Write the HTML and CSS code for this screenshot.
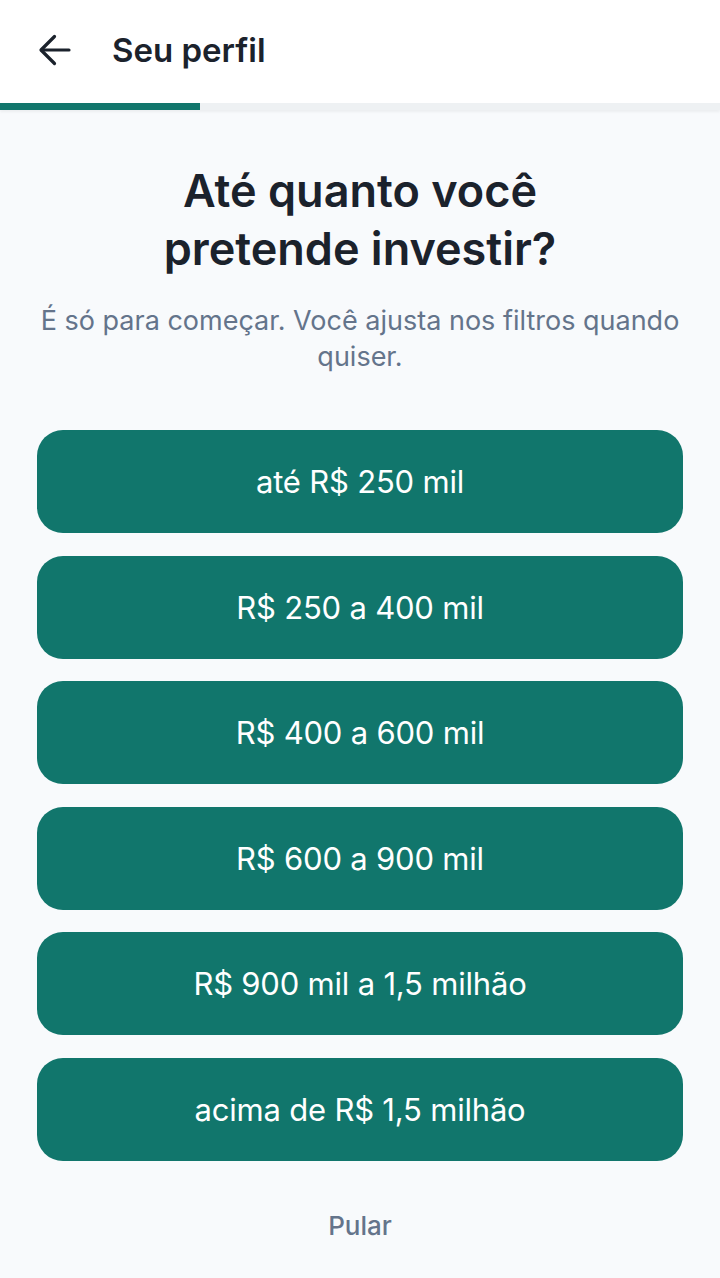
FILE: index.html
```html
<!DOCTYPE html>
<html lang="pt-BR">
<head>
<meta charset="utf-8">
<link rel="stylesheet" href="styles.css">
</head>
<body>
<header class="topbar">
  <button class="back" aria-label="Voltar">
    <svg width="34" height="34" viewBox="0 0 34 34" fill="none" stroke="#1b222c" stroke-width="3.2" stroke-linecap="round" stroke-linejoin="round">
      <path d="M31 17H3.5"/>
      <path d="M16.5 3.5L3 17l13.5 13.5"/>
    </svg>
  </button>
  <h1 class="topbar-title">Seu perfil</h1>
</header>
<div class="progress"><div class="progress-fill"></div></div>
<main class="content">
  <h2 class="question">Até quanto você<br>pretende investir?</h2>
  <p class="hint">É só para começar. Você ajusta nos filtros quando quiser.</p>
  <div class="options">
    <button class="option">até R$ 250 mil</button>
    <button class="option">R$ 250 a 400 mil</button>
    <button class="option">R$ 400 a 600 mil</button>
    <button class="option">R$ 600 a 900 mil</button>
    <button class="option">R$ 900 mil a 1,5 milhão</button>
    <button class="option">acima de R$ 1,5 milhão</button>
  </div>
  <button class="skip">Pular</button>
</main>
</body>
</html>
```
FILE: styles.css
```css
* { box-sizing: border-box; }
html, body { margin: 0; padding: 0; }
body {
  font-family: Inter, "Noto Sans", "Liberation Sans", sans-serif;
  background: #f8fafc;
  width: 720px;
  min-height: 1278px;
}
.topbar {
  background: #ffffff;
  height: 103px;
  display: flex;
  align-items: center;
  padding-left: 38px;
  gap: 40px;
}
.back {
  background: none;
  border: 0;
  padding: 0;
  width: 34px;
  height: 34px;
  display: flex;
  margin-top: -4px;
}
.topbar-title {
  margin: -4px 0 0;
  font-size: 33px;
  font-weight: 600;
  color: #1b222c;
  letter-spacing: 0;
}
.progress {
  height: 7px;
  background: #eef1f3;
  box-shadow: 0 2px 3px rgba(0,0,0,0.05);
}
.progress-fill {
  width: 200px;
  height: 100%;
  background: #11766c;
}
.content {
  display: flex;
  flex-direction: column;
  align-items: center;
  padding: 52px 37px 0;
}
.question {
  margin: 0;
  text-align: center;
  font-size: 45px;
  line-height: 58px;
  font-weight: 600;
  color: #1b222c;
  letter-spacing: 0;
}
.hint {
  margin: 25px 0 0;
  text-align: center;
  font-size: 27px;
  line-height: 36px;
  color: #64748b;
}
.options {
  margin-top: 55px;
  width: 100%;
  display: flex;
  flex-direction: column;
  gap: 22.5px;
}
.option {
  height: 103px;
  border: 0;
  border-radius: 26px;
  background: #11766c;
  color: #ffffff;
  font-family: inherit;
  font-size: 31px;
  font-weight: 400;
  letter-spacing: -0.2px;
}
.skip {
  margin-top: 48px;
  background: none;
  border: 0;
  font-family: inherit;
  font-size: 26px;
  font-weight: 500;
  color: #64748b;
}
```
